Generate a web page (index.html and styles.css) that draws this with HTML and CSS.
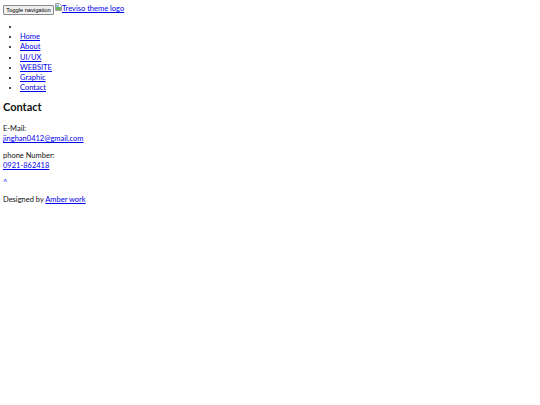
FILE: index.html
```html
<!DOCTYPE html>
<html lang="en">
    <head>
        <meta charset="UTF-8">
        <title> Contact </title>
        <link rel="stylesheet" href="styles.css">
    </head>

    <body>
        <nav class="navbar">
            <div class="navbar-header">
                <button class="navbar-toggle" type="button">Toggle navigation</button>
                <a class="navbar-brand" href="#">
                    <svg class="broken-img" width="7" height="8" viewBox="0 0 7 8">
                        <path d="M0.5 0.5 H4.5 L6.5 2.5 V7.5 H0.5 Z" fill="#fff" stroke="#a0a0a0"/>
                        <rect x="1" y="4" width="5" height="3" fill="#6fb35f"/>
                        <rect x="1" y="1.5" width="3" height="2.5" fill="#8cc0ea"/>
                    </svg>Treviso theme logo</a>
            </div>
            <ul class="nav-list">
                <li></li>
                <li><a href="#">Home</a></li>
                <li><a href="#">About</a></li>
                <li><a href="#">UI/UX</a></li>
                <li><a href="#">WEBSITE</a></li>
                <li><a href="#">Graphic</a></li>
                <li><a href="#">Contact</a></li>
            </ul>
        </nav>

        <section class="contact">
            <h2>Contact</h2>
            <p>E-Mail:<br><a href="#">jinghan0412@gmail.com</a></p>
            <p>phone Number:<br><a href="#">0921-862418</a></p>
        </section>

        <footer class="footer">
            <p><a href="#" class="to-top">^</a></p>
            <p>Designed by <a href="#">Amber work</a></p>
        </footer>
    </body>
</html>
```

FILE: styles.css
```css
* {
    padding: 0;
    margin: 0;
}

body {
    margin: 3px;
    font-family: "Lato", "Noto Sans", sans-serif;
    font-size: 7.5px;
    line-height: 10.17px;
    color: #111;
    background: white;
}

a {
    color: #0000ee;
}

.navbar-header {
    display: flex;
    align-items: center;
    height: 11px;
    margin-top: 1px;
}

.navbar-toggle {
    font-family: "Liberation Sans", Arial, sans-serif;
    font-size: 5.7px;
    line-height: 8px;
    padding: 0 2px;
    height: 10px;
    width: 51px;
    background: #efefef;
    border: 1px solid #8a8a8a;
    border-radius: 1px;
    color: #000;
}

.navbar-brand {
    display: flex;
    align-items: flex-start;
    margin-left: 1px;
}

.broken-img {
    margin-top: -1px;
}

.nav-list {
    margin-top: 7px;
    padding-left: 17px;
}

.contact h2 {
    font-size: 11px;
    line-height: 16px;
    margin: 6px 0 9px;
}

.contact p, .footer p {
    margin-bottom: 6.5px;
}

.to-top {
    text-decoration: none;
}
```
